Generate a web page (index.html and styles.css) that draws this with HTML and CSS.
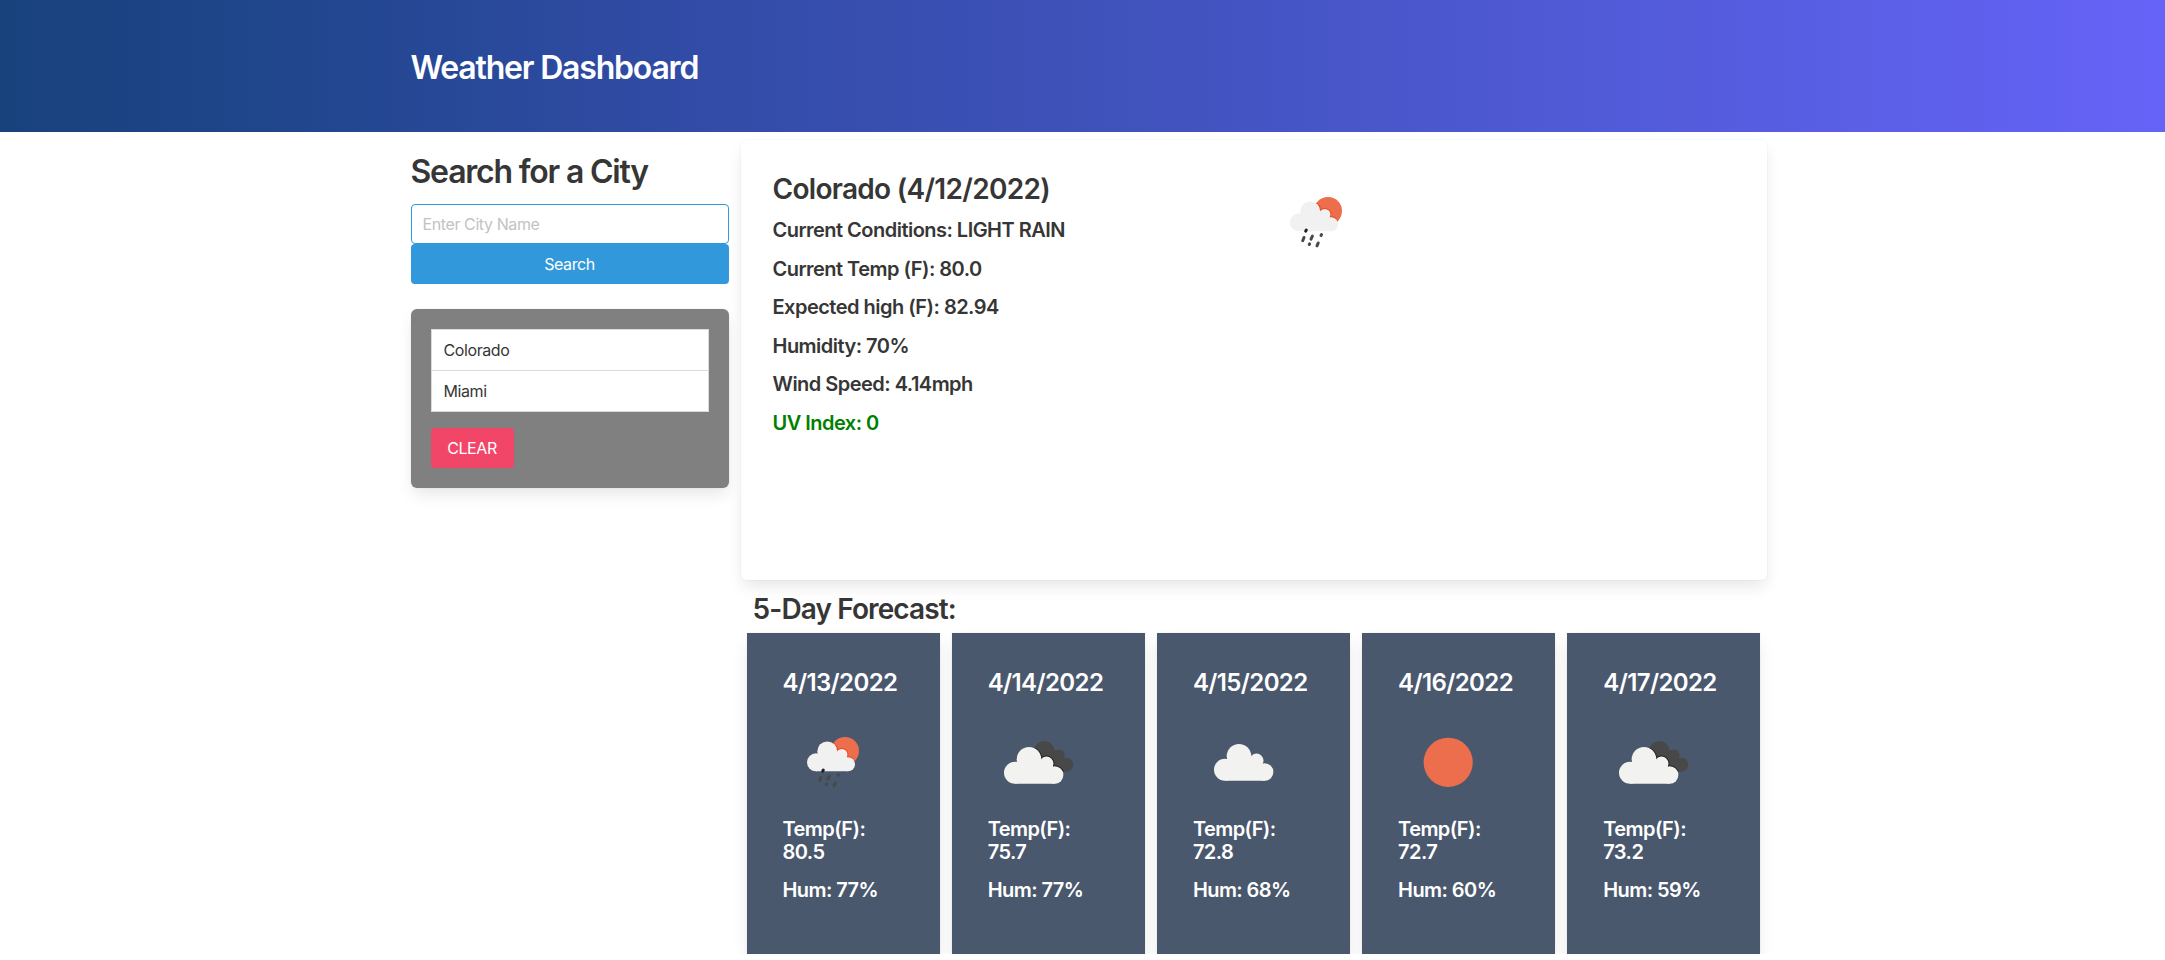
FILE: index.html
```html
<!DOCTYPE html>
<html lang="en">
<head>
<meta charset="utf-8">
<title>Weather Dashboard</title>
<link rel="stylesheet" href="styles.css">
</head>
<body>
<svg class="defs" width="0" height="0" aria-hidden="true">
  <defs>
    <g id="small-cloud">
      <circle cx="33" cy="50.3" r="9"/><circle cx="44.3" cy="39.4" r="10"/><circle cx="58.8" cy="42.5" r="5.6"/><circle cx="65" cy="52.3" r="7"/><path d="M33 43H44L60 40L65 47V59.3H33Z"/>
    </g>
    <g id="big-cloud">
      <circle cx="27" cy="60.7" r="11"/><circle cx="41" cy="47.3" r="12.3"/><circle cx="58.5" cy="51.6" r="7"/><circle cx="66.7" cy="63" r="8.7"/><path d="M27 52H41L59 48L67 57V71.7H27Z"/>
    </g>
    <g id="dark-cloud">
      <circle cx="56.3" cy="39.3" r="10.3"/><circle cx="71" cy="43.3" r="5.7"/><circle cx="78.2" cy="52.7" r="7"/><path d="M56 38H71L78 50V59.7H50Z"/>
    </g>
    <clipPath id="sun-clip"><circle cx="62" cy="39" r="14"/></clipPath>
    <clipPath id="dark-clip"><circle cx="56.3" cy="39.3" r="10.3"/><circle cx="71" cy="43.3" r="5.7"/><circle cx="78.2" cy="52.7" r="7"/><path d="M56 38H71L78 50V59.7H50Z"/></clipPath>
    <symbol id="rain" viewBox="0 0 100 100">
      <circle cx="62" cy="39" r="14" fill="#ec6e4c"/>
      <g clip-path="url(#sun-clip)"><use href="#small-cloud" fill="#e84c24" stroke="#e84c24" stroke-width="2"/></g>
      <use href="#small-cloud" fill="#f1f1f1"/>
      <g stroke="#484848" stroke-width="3" stroke-linecap="round"><path stroke="#222" d="M40.3 58L39.7 59.2"/><path d="M38 65.5L36.7 68.7M46.4 64L45 67.2M55.5 62.5L55 63.5M43.6 71.8L43.3 72.5M52.2 71L51 73.8"/></g>
    </symbol>
    <symbol id="cloud" viewBox="0 0 100 100"><use href="#big-cloud" x="5" y="-3" fill="#f2f2f0"/></symbol>
    <symbol id="clouds" viewBox="0 0 100 100">
      <use href="#dark-cloud" fill="#484848"/>
      <g clip-path="url(#dark-clip)"><use href="#big-cloud" fill="#222" stroke="#222" stroke-width="2"/></g>
      <use href="#big-cloud" fill="#f2f2f0"/>
    </symbol>
    <symbol id="sun" viewBox="0 0 100 100"><circle cx="50.2" cy="50.3" r="24.6" fill="#ec6e4c"/></symbol>
  </defs>
</svg>
<header class="hero"><div class="container"><h1 class="hero-title">Weather Dashboard</h1></div></header>
<main class="container layout">
  <aside class="sidebar">
    <h2 class="search-title">Search for a City</h2>
    <input class="input" type="text" placeholder="Enter City Name">
    <button class="button search-button">Search</button>
    <div class="box history">
      <ul class="city-list"><li>Colorado</li><li>Miami</li></ul>
      <button class="button clear-button">CLEAR</button>
    </div>
  </aside>
  <section class="content">
    <div class="box current">
      <div class="details">
        <h3 class="city">Colorado (4/12/2022)</h3>
        <p>Current Conditions: LIGHT RAIN</p>
        <p>Current Temp (F): 80.0</p>
        <p>Expected high (F): 82.94</p>
        <p>Humidity: 70%</p>
        <p>Wind Speed: 4.14mph</p>
        <p class="uv">UV Index: 0</p>
      </div>
      <div class="current-icon"><svg class="icon"><use href="#rain"/></svg></div>
    </div>
    <h3 class="forecast-title">5-Day Forecast:</h3>
    <div class="forecast">
      <article class="card"><h4>4/13/2022</h4><svg class="icon"><use href="#rain"/></svg><p>Temp(F):<br>80.5</p><p>Hum: 77%</p></article>
      <article class="card"><h4>4/14/2022</h4><svg class="icon"><use href="#clouds"/></svg><p>Temp(F):<br>75.7</p><p>Hum: 77%</p></article>
      <article class="card"><h4>4/15/2022</h4><svg class="icon"><use href="#cloud"/></svg><p>Temp(F):<br>72.8</p><p>Hum: 68%</p></article>
      <article class="card"><h4>4/16/2022</h4><svg class="icon"><use href="#sun"/></svg><p>Temp(F):<br>72.7</p><p>Hum: 60%</p></article>
      <article class="card"><h4>4/17/2022</h4><svg class="icon"><use href="#clouds"/></svg><p>Temp(F):<br>73.2</p><p>Hum: 59%</p></article>
    </div>
  </section>
</main>
</body>
</html>
```
FILE: styles.css
```css
* { box-sizing: border-box; margin: 0; padding: 0; }
html { overflow: hidden; }
body { font-family: Inter, sans-serif; font-size: 16px; line-height: 24px; color: #363636; background: #fff; }
.defs { display: block; height: 0; }
.container { width: 1344px; margin: 0 auto; }
.hero { height: 132px; padding-top: 50px; color: #fff; background: linear-gradient(90deg, #18427c 0%, #21468e 14%, #304ba4 30%, #4052bc 52%, #5a5fe6 86%, #6663f8 100%); }
.hero-title, .search-title { font-size: 32px; line-height: 36px; font-weight: 600; letter-spacing: -1.2px; }
.layout { display: flex; gap: 12px; }
.sidebar { flex: none; width: 318px; padding-top: 22px; }
.box { border-radius: 6px; box-shadow: 0 8px 16px -2px rgba(10,10,10,.1), 0 0 0 1px rgba(10,10,10,.02); }
.input { display: block; width: 100%; height: 40px; margin-top: 14px; padding: 0 11px; border: 1px solid #3298dc; border-radius: 4px; outline: 0; font: 400 16px Inter, sans-serif; letter-spacing: -0.4px; }
.input::placeholder { color: #c3c3c3; }
.button { display: block; height: 40px; border: 0; border-radius: 4px; color: #fff; font: 400 16px Inter, sans-serif; letter-spacing: -0.4px; }
.search-button { width: 100%; background: #3298dc; }
.history { height: 179px; margin-top: 25px; padding: 20px; background: #808080; }
.city-list { list-style: none; background: #fff; border: 1px solid #dbdbdb; letter-spacing: -0.4px; }
.city-list li { height: 40px; padding: 8px 12px; }
.city-list li + li { height: 41px; border-top: 1px solid #dbdbdb; }
.clear-button { width: 83px; margin-top: 16px; background: #f14668; }
.content { flex: none; width: 1026px; padding-top: 8px; }
.current { display: flex; gap: 24px; height: 440px; padding: 33px 32px 31px; background: #fff; }
.details, .current-icon { flex: 1; font-size: 20px; line-height: 22.5px; font-weight: 600; letter-spacing: -0.52px; }
.details p { margin-bottom: 16px; }
.city, .forecast-title { font-size: 28px; line-height: 32px; font-weight: 600; letter-spacing: -0.7px; }
.details .city { margin-bottom: 14px; }
.details .uv { color: #008000; }
.icon { display: block; width: 100px; height: 100px; }
.current-icon .icon { margin-top: -1px; }
.forecast-title { padding: 13px 12px 8px; letter-spacing: -0.88px; }
.forecast { display: grid; grid-template-columns: repeat(5, 193.2px); gap: 12px; padding-left: 6px; }
.card { height: 321px; padding: 36px; background: #4a586e; color: #fff; font-size: 20px; line-height: 23px; font-weight: 600; box-shadow: 0 8px 16px -2px rgba(10,10,10,.1), 0 0 0 1px rgba(10,10,10,.02); }
.card h4 { font-size: 24px; line-height: 27px; font-weight: 600; letter-spacing: -0.6px; }
.card .icon { margin: 16px 0 6px; }
.card p { margin-bottom: 15px; letter-spacing: -0.57px; }
```
